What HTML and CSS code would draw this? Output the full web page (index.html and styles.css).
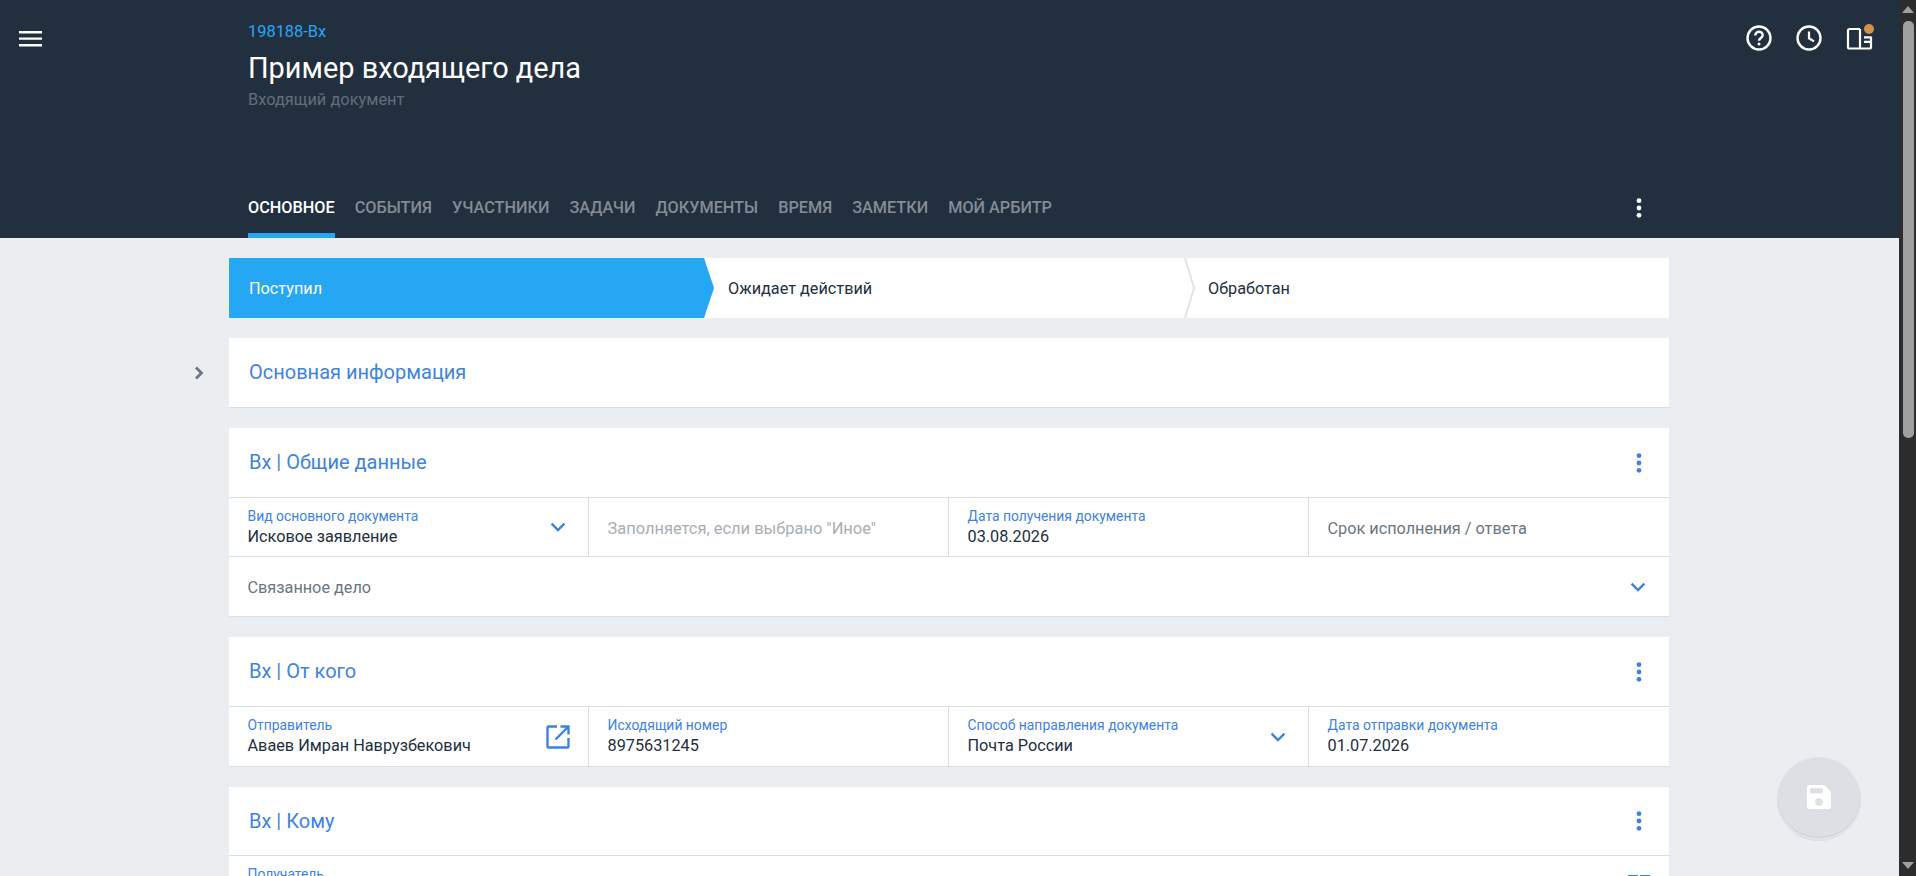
FILE: index.html
```html
<!DOCTYPE html>
<html lang="ru">
<head>
<meta charset="utf-8">
<title>Пример входящего дела</title>
<link rel="stylesheet" href="styles.css">
</head>
<body>
<div class="app">
  <div class="page">
    <header class="hero">
      <button class="menu-btn" aria-label="Меню">
        <svg width="26" height="24" viewBox="0 0 26 24"><path d="M1 5h23v2.4H1zM1 11.400h23v2.400H1zM1 18h23v2.400H1z" fill="#fff"/></svg>
      </button>
      <div class="hero-main">
        <div class="case-no">198188-Вх</div>
        <h1 class="case-title">Пример входящего дела</h1>
        <div class="case-sub">Входящий документ</div>
        <nav class="tabs">
          <a class="tab tab-active">Основное</a>
          <a class="tab">События</a>
          <a class="tab">Участники</a>
          <a class="tab">Задачи</a>
          <a class="tab">Документы</a>
          <a class="tab">Время</a>
          <a class="tab">Заметки</a>
          <a class="tab">Мой Арбитр</a>
          <span class="tabs-more"><svg width="6" height="20" viewBox="0 0 6 20"><circle cx="3" cy="2.7" r="2.4" fill="#fff"/><circle cx="3" cy="10" r="2.4" fill="#fff"/><circle cx="3" cy="17.3" r="2.4" fill="#fff"/></svg></span>
        </nav>
      </div>
      <div class="hero-icons">
        <svg width="28" height="28" viewBox="0 0 28 28" fill="none"><circle cx="14" cy="14" r="11.500" stroke="#fff" stroke-width="2.400"/><path d="M10.300 11.400c0-2.200 1.700-3.600 3.700-3.600s3.700 1.300 3.700 3.300c0 2.800-3.700 2.900-3.700 5.700" stroke="#fff" stroke-width="2.400"/><circle cx="14" cy="20" r="1.500" fill="#fff"/></svg>
        <svg width="28" height="28" viewBox="0 0 28 28" fill="none"><circle cx="14" cy="14" r="11.500" stroke="#fff" stroke-width="2.400"/><path d="M14 7.500V14.300L19 17.400" stroke="#fff" stroke-width="2.200"/></svg>
        <span class="panel-icon">
          <svg width="28" height="28" viewBox="0 0 28 28" fill="none"><path d="M15 5H4.500A1.500 1.500 0 0 0 3 6.500V23a1.500 1.500 0 0 0 1.500 1.500H24.500A1.500 1.500 0 0 0 26 23V12.500M15 5V24.500M19 13.300H26M19 17.900H26" stroke="#fff" stroke-width="2.200"/></svg>
          <i class="panel-dot"></i>
        </span>
      </div>
    </header>

    <main class="content">
      <aside class="rail">
        <svg class="rail-chevron" width="12" height="16" viewBox="0 0 12 16" fill="none"><path d="M3 2.500L8.500 8 3 13.500" stroke="#6b7685" stroke-width="2.800"/></svg>
      </aside>
      <div class="stack">
        <div class="steps">
          <div class="step step-active">Поступил</div>
          <div class="step step-mid">Ожидает действий</div>
          <div class="step step-last">Обработан</div>
        </div>

        <section class="card">
          <div class="card-head"><h2 class="card-title">Основная информация</h2></div>
        </section>

        <section class="card">
          <div class="card-head card-head-ruled">
            <h2 class="card-title">Вх | Общие данные</h2>
            <svg class="dots" width="6" height="20" viewBox="0 0 6 20"><circle cx="3" cy="2.7" r="2.4"/><circle cx="3" cy="10" r="2.4"/><circle cx="3" cy="17.3" r="2.4"/></svg>
          </div>
          <div class="row">
            <div class="field"><div class="field-text"><label class="field-label">Вид основного документа</label><div class="field-value">Исковое заявление</div></div>
              <svg class="chev" width="16" height="10" viewBox="0 0 16 10" fill="none"><path d="M1.600 1.600L8 8l6.400-6.400" stroke="#3e82de" stroke-width="2.400"/></svg></div>
            <div class="field"><span class="field-hint">Заполняется, если выбрано "Иное"</span></div>
            <div class="field"><div class="field-text"><label class="field-label">Дата получения документа</label><div class="field-value">03.08.2026</div></div></div>
            <div class="field"><span class="field-empty">Срок исполнения / ответа</span></div>
          </div>
          <div class="row">
            <div class="field field-wide"><span class="field-empty">Связанное дело</span>
              <svg class="chev" width="16" height="10" viewBox="0 0 16 10" fill="none"><path d="M1.600 1.600L8 8l6.400-6.400" stroke="#3e82de" stroke-width="2.400"/></svg></div>
          </div>
        </section>

        <section class="card">
          <div class="card-head card-head-ruled">
            <h2 class="card-title">Вх | От кого</h2>
            <svg class="dots" width="6" height="20" viewBox="0 0 6 20"><circle cx="3" cy="2.7" r="2.4"/><circle cx="3" cy="10" r="2.4"/><circle cx="3" cy="17.3" r="2.4"/></svg>
          </div>
          <div class="row">
            <div class="field"><div class="field-text"><label class="field-label">Отправитель</label><div class="field-value">Аваев Имран Наврузбекович</div></div>
              <svg class="open" width="24" height="24" viewBox="0 0 24 24" fill="none"><path d="M11 1.500H2.500a1 1 0 0 0-1 1v19a1 1 0 0 0 1 1h19a1 1 0 0 0 1-1V13" stroke="#3e82de" stroke-width="2.400"/><path d="M14.500 1.500h8v8M22 2L9.500 14.500" stroke="#3e82de" stroke-width="2.400"/></svg></div>
            <div class="field"><div class="field-text"><label class="field-label">Исходящий номер</label><div class="field-value">8975631245</div></div></div>
            <div class="field"><div class="field-text"><label class="field-label">Способ направления документа</label><div class="field-value">Почта России</div></div>
              <svg class="chev" width="16" height="10" viewBox="0 0 16 10" fill="none"><path d="M1.600 1.600L8 8l6.400-6.400" stroke="#3e82de" stroke-width="2.400"/></svg></div>
            <div class="field"><div class="field-text"><label class="field-label">Дата отправки документа</label><div class="field-value">01.07.2026</div></div></div>
          </div>
        </section>

        <section class="card card-short">
          <div class="card-head card-head-ruled">
            <h2 class="card-title">Вх | Кому</h2>
            <svg class="dots" width="6" height="20" viewBox="0 0 6 20"><circle cx="3" cy="2.7" r="2.4"/><circle cx="3" cy="10" r="2.4"/><circle cx="3" cy="17.3" r="2.4"/></svg>
          </div>
          <div class="row">
            <div class="field field-wide"><div class="field-text"><label class="field-label">Получатель</label><div class="field-value">&nbsp;</div></div>
              <svg class="grid-ico" width="24" height="24" viewBox="0 0 24 24"><path d="M1 1h10v10H1zM13 1h10v10H13zM1 13h10v10H1zM13 13h10v10H13z" fill="#3e82de"/></svg></div>
          </div>
        </section>
      </div>
      <button class="fab" aria-label="Сохранить">
        <svg class="fab-ico" width="24" height="24" viewBox="0 0 24 24"><path d="M0 2.500A2.500 2.500 0 0 1 2.500 0H17l7 7v14.500a2.500 2.500 0 0 1-2.500 2.500h-19A2.500 2.500 0 0 1 0 21.500z" fill="#fff"/><rect x="3" y="3.300" width="12.700" height="5" fill="#dcdfe3"/><circle cx="12" cy="17" r="3.800" fill="#dcdfe3"/></svg>
      </button>
    </main>
  </div>
  <div class="scrollbar" aria-hidden="true">
    <span class="sb-arrow sb-up"></span>
    <div class="sb-track"><span class="sb-thumb"></span></div>
    <span class="sb-arrow sb-down"></span>
  </div>
</div>
</body>
</html>
```
FILE: styles.css
```css
* { box-sizing: border-box; }
html, body { margin: 0; height: 100%; overflow: hidden; }
body { font-family: Roboto, "Noto Sans", sans-serif; color: #222f3e; background: #ebeef1; }
.app { display: flex; height: 876px; }
.page { width: 1899px; height: 876px; overflow: hidden; flex: none; }

.hero { position: relative; height: 238px; background: #222f3e; }
.menu-btn { position: absolute; left: 18px; top: 26px; width: 26px; height: 24px; padding: 0; border: 0; background: none; }
.hero-main { padding: 22px 0 0 248px; height: 238px; display: flex; flex-direction: column; }
.case-no { font-size: 16.400px; line-height: 20px; color: #25a7f3; }
.case-title { margin: 7px 0 0; font-size: 28.900px; line-height: 38px; font-weight: 400; color: #fff; }
.case-sub { margin-top: 3px; font-size: 16.400px; line-height: 20px; color: #626e7c; }
.tabs { margin-top: auto; height: 56px; display: flex; gap: 20px; width: 1421px; position: relative; }
.tab { height: 56px; padding-top: 15px; border-bottom: 5px solid transparent; font-size: 16.250px; line-height: 22px; font-weight: 500; text-transform: uppercase; color: #848c96; }
.tab-active { color: #fff; border-bottom-color: #25a7f3; }
.tabs-more { position: absolute; right: 27px; top: 16px; height: 20px; display: flex; align-items: center; }
.hero-icons { position: absolute; top: 24px; right: 26px; display: flex; gap: 22px; }
.panel-icon { position: relative; display: block; width: 28px; height: 28px; }
.panel-dot { position: absolute; right: -1px; top: 0; width: 10px; height: 10px; border-radius: 50%; background: #d29148; }

.content { position: relative; display: flex; height: 638px; }
.rail { width: 229px; flex: none; position: relative; }
.rail-chevron { position: absolute; left: 193px; top: 127px; }
.stack { width: 1440px; padding-top: 20px; display: flex; flex-direction: column; gap: 20px; }

.steps { display: flex; height: 60px; background: #fff; }
.step { position: relative; font-size: 16.250px; line-height: 62px; color: #222f3e; }
.step-active { flex: 0 0 485px; padding-left: 20px; background: #25a7f3; color: #fff; clip-path: polygon(0 0, 475px 0, 100% 50%, 475px 100%, 0 100%); }
.step-mid { flex: 0 0 470px; padding-left: 14px; }
.step-mid::after { content: ""; position: absolute; left: 100%; top: 0; width: 11px; height: 60px; background: #dfe3e7; clip-path: polygon(0 0, 2px 0, 11px 50%, 2px 100%, 0 100%, 9px 50%); }
.step-last { flex: 1; padding-left: 24px; }

.card { background: #fff; border-bottom: 1px solid #d9dee2; }
.card-head { height: 69px; padding: 0 20px; display: flex; align-items: center; justify-content: space-between; }
.card-head-ruled { height: 70px; border-bottom: 1px solid #d9dee2; }
.card-short .card-head-ruled { height: 69px; }
.card-title { margin: 0 0 1px; font-size: 20px; line-height: 28px; font-weight: 400; color: #4083dd; }
.dots { fill: #3e82de; margin-right: 7px; }

.row { display: grid; grid-template-columns: repeat(4, 360px); height: 59px; }
.row:not(:last-child) { border-bottom: 1px solid #d9dee2; }
.field { display: flex; align-items: center; justify-content: space-between; padding: 0 22px 0 18.500px; border-right: 1px solid #d9dee2; min-width: 0; }
.field:last-child { border-right: 0; }
.field-wide { grid-column: 1 / -1; padding-right: 23px; }
.field-label { display: block; margin-bottom: 2px; font-size: 13.900px; line-height: 17px; color: #4083dd; }
.field-value { font-size: 16.250px; line-height: 20px; color: #222f3e; }
.field-hint { padding-top: 2px; font-size: 16.450px; color: #a8aeb5; }
.field-empty { padding-top: 2px; font-size: 16.250px; color: #6c7680; }
.chev, .open, .grid-ico { flex: none; }
.open { margin-right: -4px; }
.grid-ico { margin-right: -5px; }

.fab { position: absolute; left: 1777px; top: 519px; width: 84px; height: 84px; border: 0; padding: 0; border-radius: 50%; background: #dcdfe3; display: flex; align-items: center; justify-content: center; box-shadow: inset 0 -3px 0 #e0e3e7, inset 0 -4px 0 #cfcbdc; }
.fab-ico { margin-bottom: 4px; }

.scrollbar { width: 17px; height: 876px; flex: none; background: #2c2c2c; display: flex; flex-direction: column; }
.sb-arrow { display: block; height: 17px; position: relative; }
.sb-up::after, .sb-down::after { content: ""; position: absolute; left: 3px; border-left: 6.500px solid transparent; border-right: 6.500px solid transparent; }
.sb-up::after { top: 6px; border-bottom: 7px solid #9f9f9f; }
.sb-down::after { bottom: 7px; border-top: 7px solid #9f9f9f; }
.sb-track { flex: 1; padding: 4px 3px 0 4px; }
.sb-thumb { display: block; width: 10.500px; height: 416.500px; border-radius: 5px; background: #9f9f9f; }
```
